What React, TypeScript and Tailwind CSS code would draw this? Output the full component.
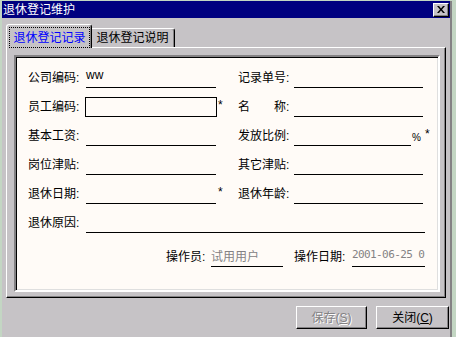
import React from "react";

// underlined field, as in the old Delphi forms
function Line({ className = "", children }: { className?: string; children?: React.ReactNode }) {
  return <div className={`h-[20px] shrink-0 border-b border-black flex ${className}`}>{children}</div>;
}

function Label({ className = "", children }: { className?: string; children: React.ReactNode }) {
  return <span className={`shrink-0 whitespace-pre ${className}`}>{children}</span>;
}

export default function App() {
  return (
    <div className="w-[456px] h-[337px] overflow-hidden bg-[#c3d6c3] pl-[2px] pt-[1px] pr-[4px] flex font-['Liberation_Sans','Noto_Sans_CJK_SC',sans-serif] text-[12px] leading-[14px] text-black">
      <div className="flex-1 flex flex-col bg-[#c6c3c6] border-r-2 border-[#848284]">
        {/* title bar */}
        <div className="h-[17px] shrink-0 bg-[#000080] flex items-center pl-[1px] pr-[1px]">
          <span className="text-white flex-1">退休登记维护</span>
          <div className="w-[16px] h-[14px] bg-[#c6c3c6] border border-t-white border-l-white border-r-black border-b-black shadow-[inset_-1px_-1px_0_#848284] flex items-center justify-center">
            <svg width="8" height="7" viewBox="0 0 8 7">
              <path d="M0 0h2l2 2.5L6 0h2L5 3.5 8 7H6L4 4.5 2 7H0l3-3.5z" fill="#000" />
            </svg>
          </div>
        </div>

        {/* tabs */}
        <div className="flex items-end pl-[4px] pt-[6px] relative z-10">
          <div className="w-[86px] h-[24px] -mb-px bg-[#c6c3c6] border-t border-l border-r border-t-white border-l-white border-r-black rounded-t-[3px] shadow-[inset_-1px_0_0_#848284] pt-[2px] pl-[2px] pr-[1px] flex">
            <div className="flex-1 border border-dotted border-black flex items-center justify-center text-[#0000ff]">
              退休登记记录
            </div>
          </div>
          <div className="w-[83px] h-[19px] bg-[#c6c3c6] border-t border-r border-t-white border-r-black rounded-tr-[3px] shadow-[inset_-1px_0_0_#848284] flex items-center justify-center pr-[1px]">
            退休登记说明
          </div>
        </div>

        {/* tab page */}
        <div className="mx-[4px] border border-t-white border-l-white border-r-black border-b-black shadow-[inset_-1px_-1px_0_#848284] pl-[7px] pt-[7px] pr-[5px] pb-[5px]">
          <div className="h-[237px] border-2 border-t-[#848284] border-l-[#848284] border-r-white border-b-white shadow-[inset_1px_1px_0_#000,inset_-1px_-1px_0_#dfdfdf] bg-[#fffbf7] pt-[11px] flex flex-col gap-[9px]">
            <div className="flex h-[20px] items-center pl-[12px]">
              <Label className="w-[58px]">公司编码:</Label>
              <Line className="w-[130px] items-start">ww</Line>
              <span className="w-[22px]" />
              <Label className="w-[56px]">记录单号:</Label>
              <Line className="w-[129px]" />
            </div>

            <div className="flex h-[20px] items-center pl-[12px]">
              <Label className="w-[57px]">员工编码:</Label>
              <div className="w-[132px] h-[20px] shrink-0 border border-black" />
              <span className="w-[21px] self-start pl-[1px] pt-[1px]">*</span>
              <Label className="w-[56px]">{"名　　称:"}</Label>
              <Line className="w-[129px]" />
            </div>

            <div className="flex h-[20px] items-center pl-[12px]">
              <Label className="w-[58px]">基本工资:</Label>
              <Line className="w-[130px]" />
              <span className="w-[22px]" />
              <Label className="w-[56px]">发放比例:</Label>
              <Line className="w-[117px]" />
              <span className="w-[14px] pl-[1px] text-[10px] self-end pb-[1px]">%</span>
              <span className="self-start pt-[1px]">*</span>
            </div>

            <div className="flex h-[20px] items-center pl-[12px]">
              <Label className="w-[58px]">岗位津贴:</Label>
              <Line className="w-[130px]" />
              <span className="w-[22px]" />
              <Label className="w-[56px]">其它津贴:</Label>
              <Line className="w-[129px]" />
            </div>

            <div className="flex h-[20px] items-center pl-[12px]">
              <Label className="w-[58px]">退休日期:</Label>
              <Line className="w-[130px]" />
              <span className="w-[22px] self-start pl-[2px] pt-[1px]">*</span>
              <Label className="w-[56px]">退休年龄:</Label>
              <Line className="w-[129px]" />
            </div>

            <div className="flex h-[20px] items-center pl-[12px]">
              <Label className="w-[58px]">退休原因:</Label>
              <Line className="w-[339px]" />
            </div>

            <div className="flex h-[20px] items-center pl-[150px] mt-[5px]">
              <Label className="w-[45px]">操作员:</Label>
              <Line className="w-[72px] items-center text-[#848284]">试用用户</Line>
              <span className="w-[11px]" />
              <Label className="w-[58px]">操作日期:</Label>
              <Line className="w-[73px] items-center text-[#848284] font-['DejaVu_Sans_Mono',monospace] text-[11px] tracking-[-0.6px] overflow-hidden whitespace-nowrap pb-[3px]">
                2001-06-25 0
              </Line>
            </div>
          </div>
        </div>

        {/* buttons */}
        <div className="flex justify-end gap-[9px] pr-[1px] mt-[8px]">
          <div className="w-[71px] h-[23px] border border-t-white border-l-white border-r-black border-b-black shadow-[inset_-1px_-1px_0_#848284] flex items-center justify-center text-[#848284] [text-shadow:1px_1px_0_#fff]">
            保存(<u>S</u>)
          </div>
          <div className="w-[73px] h-[23px] border border-t-white border-l-white border-r-black border-b-black shadow-[inset_-1px_-1px_0_#848284] flex items-center justify-center">
            关闭(<u>C</u>)
          </div>
        </div>
      </div>
    </div>
  );
}
